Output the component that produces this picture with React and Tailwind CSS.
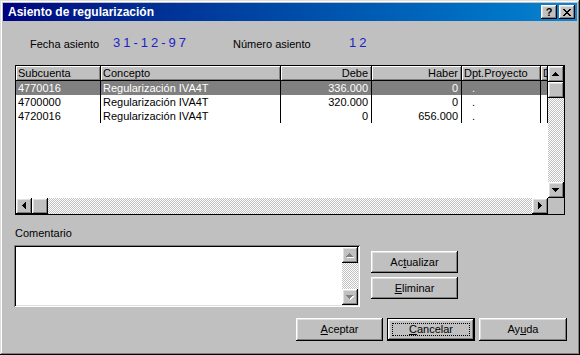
import React from 'react';

const font = "font-['Liberation_Sans',Arial,sans-serif]";
const raised = "shadow-[inset_-1px_-1px_#000,inset_1px_1px_#fff,inset_-2px_-2px_#808080,inset_2px_2px_#dfdfdf]";
const checker = "bg-[image:repeating-conic-gradient(#c0c0c0_0_25%,#fff_0_50%)] bg-[length:2px_2px]";

const Arrow = ({ dir, disabled }) => {
    const pts = {
        up: "0,4 7,4 3.5,0",
        down: "0,0 7,0 3.5,4",
        left: "4,0 4,7 0,3.5",
        right: "0,0 0,7 4,3.5",
    }[dir];
    const vertical = dir === 'up' || dir === 'down';
    const w = vertical ? 8 : 5;
    const h = vertical ? 5 : 8;
    return (
        <svg width={w} height={h} viewBox={`0 0 ${w} ${h}`} shapeRendering="crispEdges">
            {disabled && <polygon points={pts} fill="#fff" transform="translate(1,1)" />}
            <polygon points={pts} fill={disabled ? '#808080' : '#000'} />
        </svg>
    );
};

const ScrollBtn = ({ dir, disabled, className = '' }) => (
    <div className={`w-[16px] h-[16px] bg-[#c0c0c0] flex items-center justify-center ${raised} ${className}`}>
        <Arrow dir={dir} disabled={disabled} />
    </div>
);

const columns = [
    { label: 'Subcuenta', w: 'w-[85px]', align: 'text-left pl-[2px]' },
    { label: 'Concepto', w: 'w-[180px]', align: 'text-left pl-[2px]' },
    { label: 'Debe', w: 'w-[91px]', align: 'text-right pr-[3px]' },
    { label: 'Haber', w: 'w-[90px]', align: 'text-right pr-[3px]' },
    { label: 'Dpt.Proyecto', w: 'w-[79px]', align: 'text-left pl-[2px]' },
    { label: 'Dpt.Tarea', w: 'w-[7px]', align: 'text-left pl-[2px]' },
];

const rows = [
    ['4770016', 'Regularización IVA4T', '336.000', '0', '.', ''],
    ['4700000', 'Regularización IVA4T', '320.000', '0', '.', ''],
    ['4720016', 'Regularización IVA4T', '0', '656.000', '.', ''],
];

const WinButton = ({ children, isDefault, className = '' }) => (
    <div className={`relative bg-[#c0c0c0] flex items-center justify-center text-[11px] text-black ${isDefault ? 'border border-black' : ''} ${raised} ${className}`}>
        {isDefault && <div className="absolute inset-[4px] border border-dotted border-black" />}
        <span>{children}</span>
    </div>
);

const App = () => {
    return (
        <div className={`w-[580px] h-[355px] bg-[#c0c0c0] p-[3px] flex flex-col ${font} shadow-[inset_-1px_-1px_#000,inset_1px_1px_#dfdfdf,inset_-2px_-2px_#808080,inset_2px_2px_#fff]`}>

            {/* Title bar */}
            <div className="h-[18px] flex items-center justify-between pl-[5px] pr-[2px] bg-gradient-to-r from-[#000080] to-[#1084d0]">
                <span className="text-white font-bold text-[12px] leading-none">Asiento de regularización</span>
                <div className="flex gap-[2px]">
                    <div className={`w-[16px] h-[14px] bg-[#c0c0c0] flex items-center justify-center text-[11px] font-bold leading-none ${raised}`}>?</div>
                    <div className={`w-[16px] h-[14px] bg-[#c0c0c0] flex items-center justify-center ${raised}`}>
                        <svg width="8" height="7" viewBox="0 0 8 7" shapeRendering="crispEdges">
                            <path d="M0 0h2v1h1v1h2v-1h1v-1h2v1h-1v1h-1v1h-1v1h1v1h1v1h1v1h-2v-1h-1v-1h-2v1h-1v1h-2v-1h1v-1h1v-1h1v-1h-1v-1h-1v-1h-1z" fill="#000" />
                        </svg>
                    </div>
                </div>
            </div>

            {/* Content */}
            <div className="flex flex-col pl-[12px] pr-[12px]">

                {/* Info row */}
                <div className="mt-[16px] h-[14px] flex items-center text-[11px] text-black">
                    <span className="ml-[15px] w-[83px]">Fecha asiento</span>
                    <span className="w-[120px] text-[13px] tracking-[3px] text-[#2020c8] -mt-[3px]">31-12-97</span>
                    <span className="w-[116px]">Número asiento</span>
                    <span className="text-[13px] tracking-[3px] text-[#2020c8] -mt-[3px]">12</span>
                </div>

                {/* Grid */}
                <div className="mt-[14px] w-[550px] h-[150px] border border-black bg-white flex flex-col">
                    <div className="flex h-[132px]">
                        <div className="w-[532px] flex flex-col text-[11px] overflow-hidden">
                            <div className="flex h-[15px] bg-[#c0c0c0]">
                                {columns.map(col => (
                                    <div key={col.label} className={`${col.w} shrink-0 overflow-hidden whitespace-nowrap leading-[14px] border-r border-b border-black shadow-[inset_1px_1px_#fff,inset_-1px_-1px_#808080] ${col.align}`}>
                                        {col.label}
                                    </div>
                                ))}
                            </div>
                            {rows.map((row, i) => (
                                <div key={row[0]} className={`flex h-[14px] ${i === 0 ? 'bg-[#808080] text-white' : 'bg-white text-black'}`}>
                                    {row.map((cell, j) => (
                                        <div key={j} className={`${columns[j].w} shrink-0 overflow-hidden whitespace-nowrap leading-[14px] border-r border-black ${columns[j].align} ${j === 4 ? 'pl-[10px]' : ''}`}>
                                            {cell}
                                        </div>
                                    ))}
                                </div>
                            ))}
                        </div>
                        <div className="w-[16px] flex flex-col">
                            <ScrollBtn dir="up" />
                            <div className={`w-[16px] h-[16px] bg-[#c0c0c0] ${raised}`} />
                            <div className={`flex-1 ${checker}`} />
                            <ScrollBtn dir="down" />
                        </div>
                    </div>
                    <div className="flex h-[16px]">
                        <ScrollBtn dir="left" />
                        <div className={`w-[16px] h-[16px] bg-[#c0c0c0] ${raised}`} />
                        <div className={`flex-1 ${checker}`} />
                        <ScrollBtn dir="right" />
                        <div className="w-[16px] h-[16px] bg-[#c0c0c0]" />
                    </div>
                </div>

                {/* Comentario */}
                <div className="mt-[11px] h-[14px] leading-[14px] text-[11px] text-black">Comentario</div>

                <div className="mt-[5px] flex">
                    <div className="-ml-px w-[346px] h-[62px] p-[2px] bg-white shadow-[inset_1px_1px_#808080,inset_-1px_-1px_#fff,inset_2px_2px_#000,inset_-2px_-2px_#dfdfdf] flex">
                        <div className="flex-1 bg-white" />
                        <div className="w-[16px] flex flex-col">
                            <ScrollBtn dir="up" disabled />
                            <div className={`flex-1 ${checker}`} />
                            <ScrollBtn dir="down" disabled />
                        </div>
                    </div>
                    <div className="ml-[11px] mt-[6px] flex flex-col gap-[4px]">
                        <WinButton className="w-[87px] h-[22px]">Ac<u>t</u>ualizar</WinButton>
                        <WinButton className="w-[87px] h-[22px]"><u>E</u>liminar</WinButton>
                    </div>
                </div>

                {/* Bottom buttons */}
                <div className="mt-[11px] flex justify-end gap-[4px] -mr-[2px]">
                    <WinButton className="w-[87px] h-[23px]"><u>A</u>ceptar</WinButton>
                    <WinButton isDefault className="w-[88px] h-[23px]"><u>C</u>ancelar</WinButton>
                    <WinButton className="w-[88px] h-[23px]">Ay<u>u</u>da</WinButton>
                </div>
            </div>
        </div>
    );
};

export default App;
